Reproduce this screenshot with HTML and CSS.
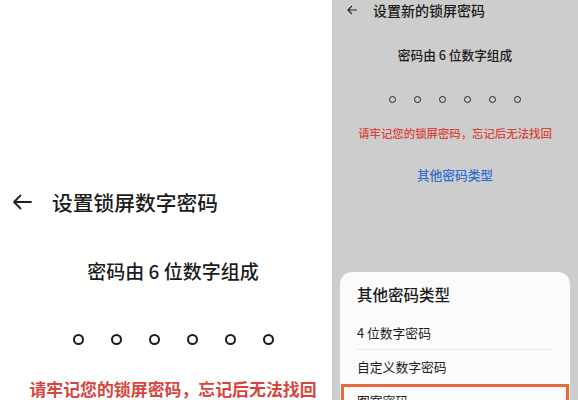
FILE: index.html
```html
<!DOCTYPE html>
<html lang="zh-CN">
<head>
<meta charset="utf-8">
<title>设置锁屏数字密码</title>
<link rel="stylesheet" href="styles.css">
</head>
<body>
<div class="page">
  <section class="left">
    <div class="hdr">
      <svg class="back" width="20" height="16" viewBox="0 0 20 16" aria-hidden="true">
        <path d="M19 8H2M8.5 1.5L2 8l6.5 6.5" fill="none" stroke="#222" stroke-width="1.8" stroke-linecap="round" stroke-linejoin="round"/>
      </svg>
      <h1 class="title">设置锁屏数字密码</h1>
    </div>
    <div class="lbody">
      <p class="sub">密码由 6 位数字组成</p>
      <div class="dots">
        <span class="dot"></span><span class="dot"></span><span class="dot"></span><span class="dot"></span><span class="dot"></span><span class="dot"></span>
      </div>
      <p class="warn">请牢记您的锁屏密码，忘记后无法找回</p>
    </div>
  </section>
  <section class="right">
    <div class="rhdr">
      <svg class="rback" width="10" height="10" viewBox="0 0 10 10" aria-hidden="true">
        <path d="M9.5 5H1M4.5 1.3L1 5l3.5 3.7" fill="none" stroke="#222" stroke-width="1.2" stroke-linecap="round" stroke-linejoin="round"/>
      </svg>
      <span class="rtitle">设置新的锁屏密码</span>
    </div>
    <div class="rbody">
      <p class="rsub">密码由 6 位数字组成</p>
      <div class="rdots">
        <span class="rdot"></span><span class="rdot"></span><span class="rdot"></span><span class="rdot"></span><span class="rdot"></span><span class="rdot"></span>
      </div>
      <p class="rwarn">请牢记您的锁屏密码，忘记后无法找回</p>
      <p class="rlink">其他密码类型</p>
    </div>
    <div class="sheet">
      <div class="sheet-title">其他密码类型</div>
      <div class="item divided">4 位数字密码</div>
      <div class="item">自定义数字密码</div>
      <div class="item selected">图案密码</div>
    </div>
  </section>
</div>
</body>
</html>
```
FILE: styles.css
```css
* { box-sizing: border-box; }
html, body { margin: 0; padding: 0; }
body {
  width: 578px;
  height: 400px;
  overflow: hidden;
  background: #fff;
  font-family: "Noto Sans CJK SC", "Noto Sans", "Liberation Sans", sans-serif;
  color: #1a1a1a;
}
p, h1 { margin: 0; }

.page { display: flex; width: 578px; height: 400px; }

/* left */
.left {
  width: 332px;
  height: 400px;
  background: #fff;
  padding-top: 187px;
  overflow: hidden;
}
.hdr {
  display: flex;
  align-items: center;
  height: 30px;
  padding-left: 12px;
}
.back { flex: none; margin-right: 20px; }
.title {
  font-size: 20.75px;
  font-weight: 500;
  line-height: 30px;
  color: #1c1c1c;
}
.lbody {
  padding-left: 14px;
  text-align: center;
}
.sub {
  margin-top: 41px;
  font-size: 19px;
  line-height: 26px;
  font-weight: 500;
  color: #1c1c1c;
}
.dots {
  margin-top: 50px;
  display: flex;
  justify-content: center;
  gap: 27px;
}
.dot {
  width: 11px;
  height: 11px;
  border: 2px solid #1c1c1c;
  border-radius: 50%;
}
.warn {
  margin-top: 33px;
  font-size: 16.9px;
  line-height: 22px;
  font-weight: 700;
  color: #d8453c;
  white-space: nowrap;
}

/* right */
.right {
  width: 246px;
  height: 400px;
  background: #cdcdcd;
  overflow: hidden;
}
.rhdr {
  display: flex;
  align-items: center;
  height: 20px;
  padding-left: 15px;
}
.rback { flex: none; margin-right: 16px; }
.rtitle {
  font-size: 14px;
  line-height: 20px;
  font-weight: 500;
  color: #1c1c1c;
}
.rbody { text-align: center; }
.rsub {
  margin-top: 26px;
  font-size: 12.7px;
  line-height: 18px;
  font-weight: 500;
  color: #1c1c1c;
}
.rdots {
  margin-top: 32px;
  display: flex;
  justify-content: center;
  gap: 18px;
}
.rdot {
  width: 7px;
  height: 7px;
  border: 1.4px solid #222;
  border-radius: 50%;
}
.rwarn {
  margin-top: 22px;
  font-size: 11.4px;
  line-height: 16px;
  font-weight: 500;
  color: #d9433b;
  white-space: nowrap;
}
.rlink {
  margin-top: 25px;
  font-size: 12.7px;
  line-height: 18px;
  font-weight: 500;
  color: #2e6ed0;
}
.sheet {
  margin: 88px 8px 0;
  background: #fbfbfb;
  border-radius: 12px 12px 0 0;
  padding: 0 1px;
}
.sheet-title {
  height: 44px;
  line-height: 44px;
  padding-left: 16px;
  font-size: 15.5px;
  font-weight: 500;
  color: #1a1a1a;
}
.item {
  height: 34px;
  line-height: 34px;
  padding-left: 16px;
  font-size: 12.8px;
  color: #1c1c1c;
}
.item.divided { position: relative; }
.item.divided::after {
  content: "";
  position: absolute;
  left: 16px;
  right: 16px;
  bottom: 0;
  height: 1px;
  background: #e6e6e6;
}
.item.selected {
  border: 3px solid #e8693c;
  padding-left: 13px;
  line-height: 28px;
}
```
